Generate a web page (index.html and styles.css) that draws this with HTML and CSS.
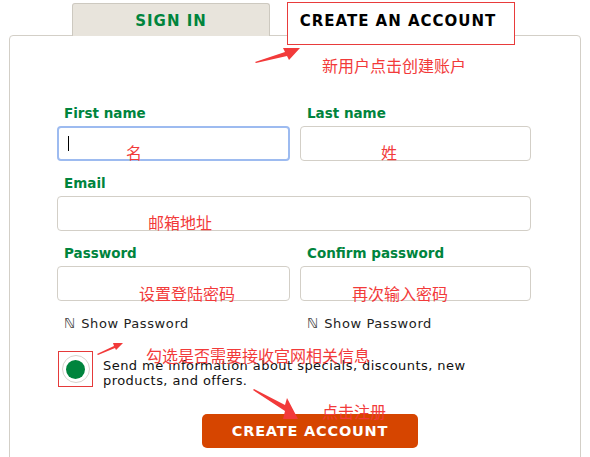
FILE: index.html
```html
<!DOCTYPE html>
<html>
<head>
<meta charset="utf-8">
<link rel="stylesheet" href="styles.css">
</head>
<body>
<div class="page">
  <div class="tabs">
    <div class="tab tab-signin">SIGN IN</div>
    <div class="tab tab-create">CREATE AN ACCOUNT</div>
  </div>
  <div class="panel">
    <div class="grid">
      <div class="field">
        <label class="lbl">First name</label>
        <div class="input focused"><span class="caret"></span></div>
      </div>
      <div class="field">
        <label class="lbl">Last name</label>
        <div class="input"></div>
      </div>
      <div class="field full">
        <label class="lbl">Email</label>
        <div class="input"></div>
      </div>
      <div class="field">
        <label class="lbl">Password</label>
        <div class="input"></div>
        <div class="show"><span class="n">ℕ</span>Show Password</div>
      </div>
      <div class="field">
        <label class="lbl">Confirm password</label>
        <div class="input"></div>
        <div class="show"><span class="n">ℕ</span>Show Password</div>
      </div>
    </div>
    <div class="optin">
      <div class="radio-box"><div class="radio"><div class="dot"></div></div></div>
      <div class="optin-text">Send me information about specials, discounts, new products, and offers.</div>
    </div>
    <div class="btn-row"><div class="btn">CREATE ACCOUNT</div></div>
  </div>

  <div class="note n1">新用户点击创建账户</div>
  <div class="note n2">名</div>
  <div class="note n3">姓</div>
  <div class="note n4">邮箱地址</div>
  <div class="note n5">设置登陆密码</div>
  <div class="note n6">再次输入密码</div>
  <div class="note n7">勾选是否需要接收官网相关信息</div>
  <div class="note n8">点击注册</div>

  <svg class="arrows" width="590" height="457" viewBox="0 0 590 457">
    <polygon fill="#f23a3a" points="255,62 285,52 283,48 300,48 289,60 287,56 256,63"/>
    <polygon fill="#f23a3a" points="97,354 114,346 113,343 123,343 116,350 115,348 98,355"/>
    <polygon fill="#f23a3a" points="254,389 285,405 287,398 298,419 283,419 285,411 253,390"/>
  </svg>
</div>
</body>
</html>
```
FILE: styles.css
```css
* { box-sizing: border-box; }
html, body { margin: 0; padding: 0; background: #fff; }
body { font-family: "DejaVu Sans", Verdana, sans-serif; }
.page { position: relative; width: 590px; height: 457px; overflow: hidden; }

.tabs { display: flex; align-items: flex-start; padding-left: 72px; gap: 17px; position: relative; z-index: 2; }
.tab { font-weight: bold; letter-spacing: 1px; text-align: center; }
.tab-signin {
  margin-top: 3px; width: 198px; height: 33px; line-height: 35px; font-size: 15px;
  background: #e8e4dc; color: #00843d;
  border: 1px solid #cdc9c0; border-bottom: none; border-radius: 3px 3px 0 0;
}
.tab-create {
  margin-top: 2px; width: 228px; height: 43px; line-height: 37px; font-size: 15px;
  background: #fff; color: #000; border: 1px solid #e83b3b; padding-right: 6px;
}

.panel {
  margin: -10px 9px 0 9px; height: 440px;
  border: 1px solid #d3cfc7; border-radius: 4px;
  padding: 69px 49px 0 47px; position: relative; z-index: 1;
}
.grid { display: grid; grid-template-columns: 233px 231px; column-gap: 10px; row-gap: 14px; }
.full { grid-column: 1 / 3; }
.field { display: flex; flex-direction: column; }
.lbl { display: block; color: #00843d; font-weight: bold; font-size: 13.5px; line-height: 16px; padding-left: 7px; margin-bottom: 5px; }
.input { height: 35px; border: 1px solid #d3cfc7; border-radius: 4px; position: relative; background: #fff; }
.input.focused { border: 2px solid #9dbbf0; }
.caret { position: absolute; left: 9px; top: 8px; width: 1px; height: 15px; background: #000; }
.show { margin-top: 14px; height: 16px; display: flex; align-items: center; font-size: 13px; letter-spacing: 0.6px; color: #222; padding-left: 7px; }
.show .n { font-size: 14px; color: #444; margin-right: 6px; letter-spacing: 0; }

.optin { display: flex; align-items: flex-start; margin-top: 20px; }
.radio-box { width: 35px; height: 36px; border: 1px solid #e53a3a; display: flex; align-items: center; justify-content: center; margin-left: 1px; flex: none; }
.radio { width: 28px; height: 28px; border-radius: 50%; border: 1px solid #d6d3cd; display: flex; align-items: center; justify-content: center; }
.dot { width: 19px; height: 19px; border-radius: 50%; background: #00843d; }
.optin-text { margin-left: 10px; margin-top: 7px; font-size: 13px; line-height: 15px; letter-spacing: 0.45px; color: #111; width: 380px; }

.btn-row { display: flex; margin-top: 26px; padding-left: 145px; }
.btn { width: 216px; height: 34px; line-height: 34px; background: #d64500; color: #fff; border-radius: 5px; text-align: center; font-weight: bold; font-size: 14.5px; letter-spacing: 0.8px; }

.note { position: absolute; color: #f23a3a; font-family: "Noto Sans CJK SC", sans-serif; font-size: 16px; line-height: 18px; z-index: 3; white-space: nowrap; }
.n1 { left: 322px; top: 56px; }
.n2 { left: 126px; top: 143px; }
.n3 { left: 381px; top: 143px; }
.n4 { left: 148px; top: 213px; }
.n5 { left: 139px; top: 284px; }
.n6 { left: 352px; top: 284px; }
.n7 { left: 146px; top: 346px; }
.n8 { left: 322px; top: 402px; }
.arrows { position: absolute; left: 0; top: 0; z-index: 4; pointer-events: none; }
```
